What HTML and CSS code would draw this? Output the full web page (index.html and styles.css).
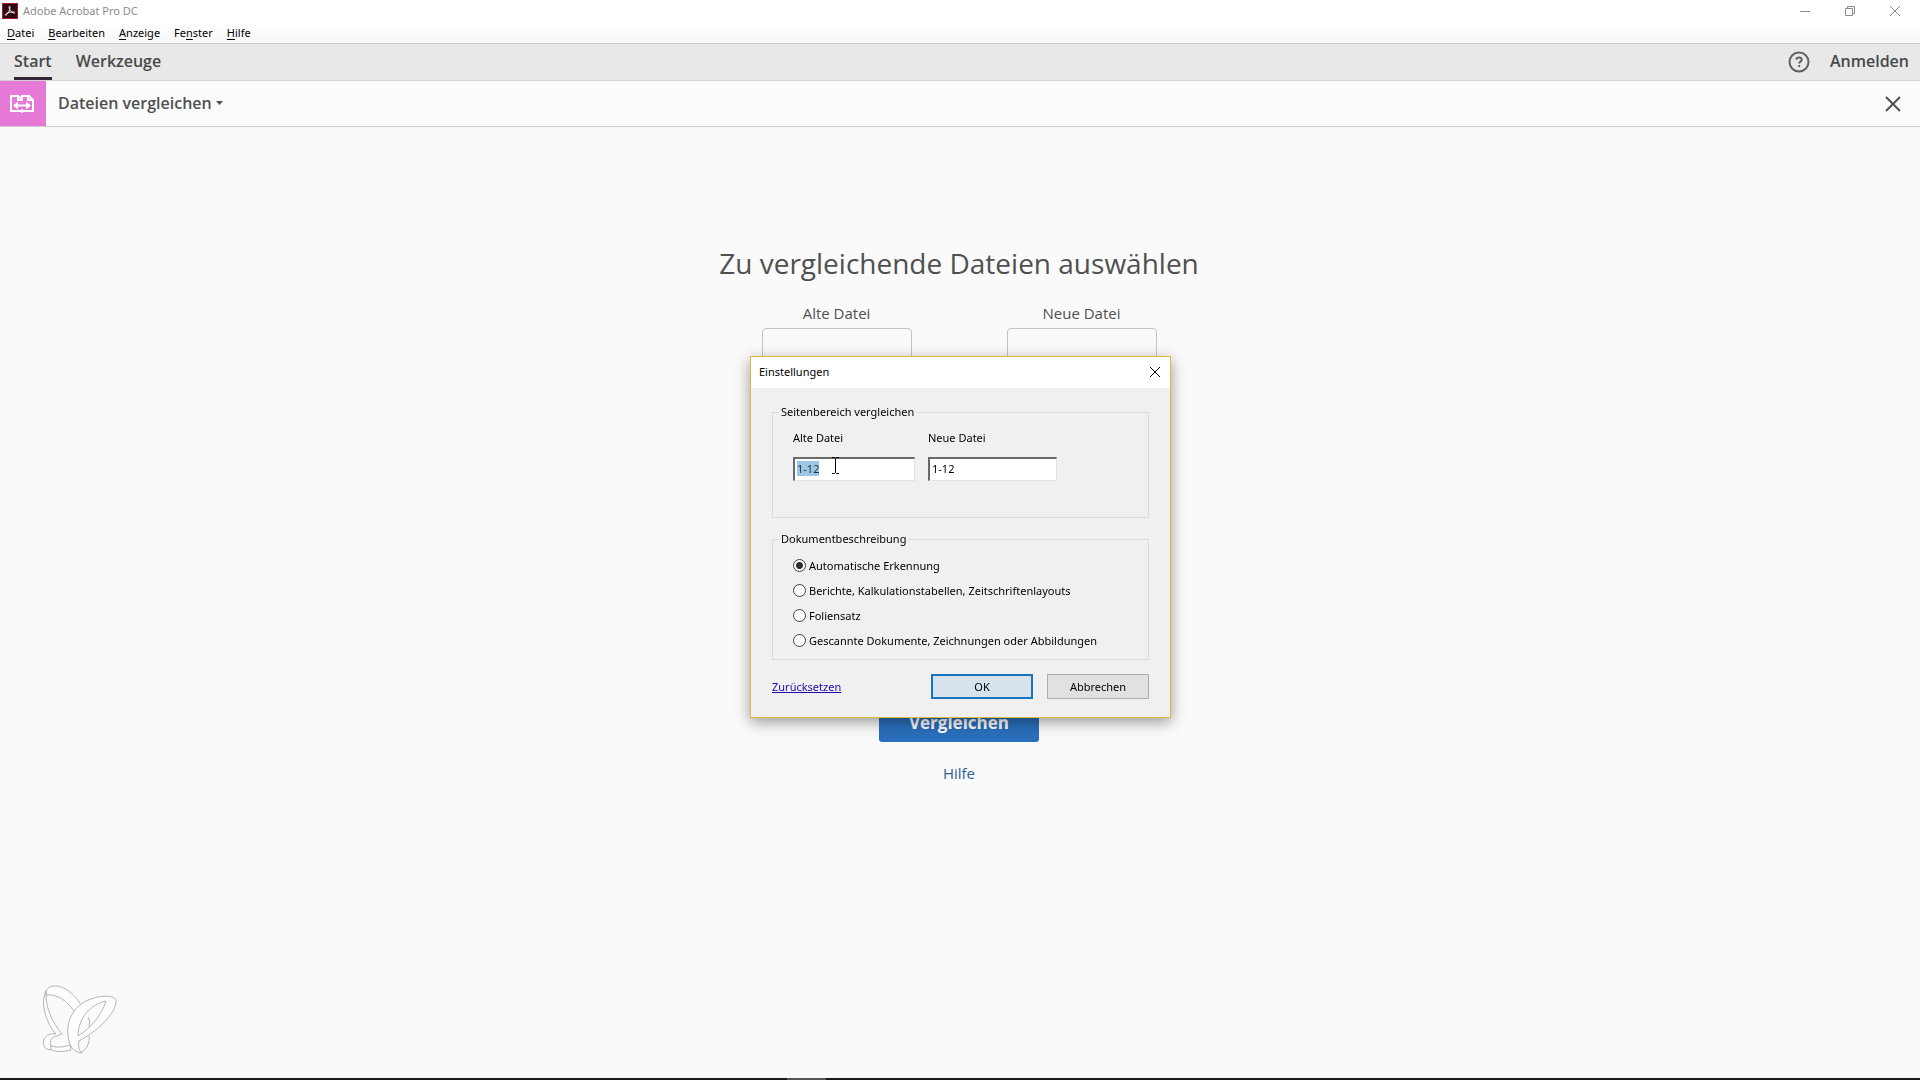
FILE: index.html
```html
<!DOCTYPE html>
<html lang="de">
<head>
<meta charset="utf-8">
<title>Adobe Acrobat Pro DC</title>
<link rel="stylesheet" href="styles.css">
</head>
<body>
<div class="window">
  <header class="titlebar">
    <svg class="app-icon" viewBox="0 0 16 16" aria-hidden="true">
      <rect width="16" height="16" fill="#a31f2b"/>
      <rect x="1" y="1" width="14" height="14" fill="#2d0a10"/>
      <path d="M7.500 3.200c1.100 0 .6 2.600-.5 5C6 10.500 4.300 12.500 3.500 12.300c-1-.4.700-2.100 3.600-2.900 2.600-.7 5.600-.7 5.700.2 0 1-2.400.5-4-1.200C7.200 6.800 6.600 3.400 7.500 3.200z" fill="none" stroke="#f3e9ea" stroke-width="1"/>
    </svg>
    <span class="app-name">Adobe Acrobat Pro DC</span>
    <div class="window-controls">
      <button class="icon-button" aria-label="Minimieren"><svg width="12" height="12" viewBox="0 0 12 12"><path d="M1 6.500h10"/></svg></button>
      <button class="icon-button" aria-label="Verkleinern"><svg width="12" height="12" viewBox="0 0 12 12"><path d="M1.500 3.500h7v7h-7zM3.500 3.500v-2h7v7h-2"/></svg></button>
      <button class="icon-button" aria-label="Schließen"><svg width="12" height="12" viewBox="0 0 12 12"><path d="M1 1l10 10M11 1L1 11"/></svg></button>
    </div>
  </header>
  <nav class="menubar" aria-label="Menü">
    <button><u>D</u>atei</button>
    <button><u>B</u>earbeiten</button>
    <button><u>A</u>nzeige</button>
    <button>Fe<u>n</u>ster</button>
    <button><u>H</u>ilfe</button>
  </nav>
  <nav class="tabs" aria-label="Ansichten">
    <a class="tab tab-active" href="#start">Start</a>
    <a class="tab" href="#werkzeuge">Werkzeuge</a>
    <button class="icon-button help" aria-label="Hilfe"><svg width="22" height="22" viewBox="0 0 22 22"><circle cx="11" cy="11" r="9.500"/><path d="M8.300 8.600c.2-1.500 1.300-2.100 2.700-2.100 1.600 0 2.700.8 2.700 2.200 0 1.900-2.500 1.900-2.500 3.800M11.200 14v1.900"/></svg></button>
    <a class="sign-in" href="#anmelden">Anmelden</a>
  </nav>
  <div class="toolbar">
    <span class="tool-icon"><svg width="26" height="20" viewBox="0 0 26 20" aria-hidden="true"><path d="M2 2h7l4 3V2h7l4 4v11H2z" fill="none" stroke="#fff" stroke-width="2"/><path d="M9 2v4h3M19 2v4h4M13 3v4M13 15v4" fill="none" stroke="#fff" stroke-width="2"/><path d="M7 11.500h12" stroke="#fff" stroke-width="2"/><path d="M9 7.500v8l-5-4zM17 7.500v8l5-4z" fill="#fff"/></svg></span>
    <button class="tool-name">Dateien vergleichen<svg width="7" height="4" viewBox="0 0 7 4" aria-hidden="true"><path d="M0 0h7L3.500 4z"/></svg></button>
    <button class="icon-button close-tool" aria-label="Werkzeug schließen"><svg width="16" height="16" viewBox="0 0 16 16"><path d="M1 1l14 14M15 1L1 15"/></svg></button>
  </div>
  <main class="workspace">
    <h1>Zu vergleichende Dateien auswählen</h1>
    <div class="files">
      <section class="file"><h2>Alte Datei</h2><div class="preview"></div></section>
      <section class="file"><h2>Neue Datei</h2><div class="preview"></div></section>
    </div>
    <button class="compare">Vergleichen</button>
    <a class="help-link" href="#hilfe">Hilfe</a>
    <svg class="watermark" viewBox="0 0 78 70" aria-hidden="true">
      <g fill="#fdfdfd" stroke="#a2a2a2" stroke-width=".8">
        <path d="M5 7C8 0 20 0 30 9c6 5 9 10 12 16l-6 9C31 20 17 9 5 11z"/>
        <path d="M5 7C-1 19 5 39 15 50c-4-1-10 1-12 5-2 5 0 10 6 11l2-2c-4-6-1-11 5-12l5-2C11 38 5 24 5 11z"/>
        <path d="M10 62c7 2 13 1 19-1l1 5c-7 2-14 2-20 0z"/>
        <path fill-rule="evenodd" d="M27 51c-2-15 7-31 23-36 11-4 22-4 25 1 1 10-12 27-37 41-1 5 0 9 3 12-9-1-13-7-14-18zM37 52c14-9 23-20 28-35-15 3-28 17-28 35z"/>
        <path d="M47 33c2 4 2 7 1 10M48 52c1 6-2 13-7 16" fill="none"/>
      </g>
    </svg>
  </main>
  <div class="taskbar"></div>
</div>

<div class="overlay">
  <form class="dialog" role="dialog" aria-labelledby="dialog-title">
    <header class="dialog-header">
      <span id="dialog-title">Einstellungen</span>
      <button type="button" class="icon-button" aria-label="Dialog schließen"><svg width="12" height="12" viewBox="0 0 12 12"><path d="M1 1l10 10M11 1L1 11"/></svg></button>
    </header>
    <div class="dialog-body">
      <fieldset class="group ranges">
        <legend>Seitenbereich vergleichen</legend>
        <label class="range-old">Alte Datei
          <input type="text" id="range-old" value="1-12">
          <svg class="cursor" width="9" height="17" viewBox="0 0 9 17" aria-hidden="true"><path d="M1 .5h2.500l1 1 1-1H8M4.500 1.500v14M1 16.500h2.500l1-1 1 1H8" fill="none" stroke="#000"/></svg>
        </label>
        <label class="range-new">Neue Datei
          <input type="text" value="1-12">
        </label>
      </fieldset>
      <fieldset class="group kinds">
        <legend>Dokumentbeschreibung</legend>
        <label><input type="radio" name="kind" checked>Automatische Erkennung</label>
        <label><input type="radio" name="kind">Berichte, Kalkulationstabellen, Zeitschriftenlayouts</label>
        <label><input type="radio" name="kind">Foliensatz</label>
        <label><input type="radio" name="kind">Gescannte Dokumente, Zeichnungen oder Abbildungen</label>
      </fieldset>
      <footer class="actions">
        <a href="#zuruecksetzen">Zurücksetzen</a>
        <button type="button" class="primary">OK</button>
        <button type="button">Abbrechen</button>
      </footer>
    </div>
  </form>
</div>
<script src="script.js"></script>
</body>
</html>
```
FILE: styles.css
```css
* { box-sizing: border-box; }

body {
  margin: 0;
  font: 11px/16px "Noto Sans", "Open Sans", sans-serif;
  color: #000;
  background: #fafafa;
}

button, input {
  font: inherit;
  color: inherit;
}

button {
  padding: 0;
  border: 0;
  background: none;
}

a {
  color: inherit;
  text-decoration: none;
}

.window {
  display: flex;
  flex-direction: column;
  min-height: 100vh;
}

.icon-button {
  display: flex;
  align-items: center;
  justify-content: center;
}

.icon-button svg {
  fill: none;
  stroke: currentColor;
}

.titlebar {
  display: flex;
  align-items: center;
  height: 22px;
  padding: 0 19px 0 2px;
  background: #fff;
  color: #8c8c8c;
}

.app-icon {
  width: 16px;
  height: 16px;
  margin-right: 5px;
}

.window-controls {
  display: flex;
  gap: 33px;
  margin-left: auto;
}

.menubar {
  display: flex;
  gap: 14px;
  height: 21px;
  padding: 0 7px;
  background: linear-gradient(#fff, #f7f7f7);
}

.menubar u { text-underline-offset: 2px; }

.tabs {
  display: flex;
  align-items: center;
  height: 37px;
  padding: 0 11px 0 14px;
  border-top: 1px solid #cbcbcb;
  background: #e8e8e8;
  font: 600 16px/34px "Open Sans", "Noto Sans", sans-serif;
  color: #484848;
}

.tab {
  height: 36px;
  margin-right: 24px;
}

.tab-active { border-bottom: 3px solid #33243a; }

.help {
  margin-left: auto;
  color: #606060;
}

.help svg { stroke-width: 2; }

.sign-in {
  height: 36px;
  margin-left: 20px;
}

.toolbar {
  display: flex;
  align-items: center;
  height: 47px;
  padding-right: 19px;
  border-top: 1px solid #d2d2d2;
  border-bottom: 1px solid #cdcdcd;
  background: #fbfbfb;
  color: #505050;
}

.tool-icon {
  display: flex;
  align-items: center;
  justify-content: center;
  align-self: stretch;
  width: 46px;
  padding-right: 2px;
  background: #e678d8;
}

.tool-name {
  display: flex;
  align-items: center;
  gap: 4px;
  margin-left: 12px;
  padding-bottom: 2px;
  font: 600 16px/24px "Open Sans", "Noto Sans", sans-serif;
}

.tool-name svg { fill: currentColor; }

.close-tool { margin-left: auto; }
.close-tool svg { stroke-width: 2; }

.workspace {
  display: flex;
  flex: 1;
  flex-direction: column;
  align-items: center;
  padding: 114px 2px 0 0;
  position: relative;
  font-family: "Open Sans", "Noto Sans", sans-serif;
  color: #505050;
}

h1 {
  margin: 0;
  font-size: 28px;
  font-weight: 400;
  line-height: 44px;
}

.files {
  display: flex;
  gap: 95px;
  margin-top: 16px;
}

.file { width: 150px; }

h2 {
  margin: 0;
  font-size: 15px;
  font-weight: 400;
  line-height: 24px;
  text-align: center;
}

.preview {
  height: 200px;
  margin-top: 3px;
  border: 1px solid #c4c4c4;
  border-radius: 4px;
}

.compare {
  width: 160px;
  height: 38px;
  margin-top: 176px;
  border-radius: 3px;
  background: #2a6fbc;
  color: #fff;
  font-size: 17px;
  font-weight: 700;
}

.help-link {
  margin-top: 19px;
  font-size: 15px;
  line-height: 24px;
  color: #2d5f99;
}

.watermark {
  position: absolute;
  left: 41px;
  bottom: 24px;
  width: 78px;
  height: 70px;
}

.taskbar {
  height: 2px;
  background: linear-gradient(90deg, #1c181b 41%, #555 41%, #555 43%, #1c181b 43%);
}

.overlay {
  position: fixed;
  inset: 0;
  display: flex;
  align-items: center;
  justify-content: center;
  padding: 0 0 6px 1px;
}

.dialog {
  width: 421px;
  border: 1px solid #e0b93c;
  background: #f0f0f0;
  box-shadow: 0 4px 14px rgba(0, 0, 0, .4);
}

.dialog-header {
  display: flex;
  align-items: center;
  justify-content: space-between;
  height: 31px;
  padding: 0 9px 2px 8px;
  background: #fff;
}

.dialog-body { padding: 16px 21px 18px; }

.group {
  min-width: 0;
  margin: 0;
  padding: 0 20px;
  border: 1px solid #dcdcdc;
}

.group legend {
  margin-left: -14px;
  padding: 0 2px;
}

.ranges {
  display: flex;
  gap: 13px;
  height: 114px;
}

.ranges label {
  position: relative;
  padding-top: 10px;
}

.ranges input {
  display: block;
  width: 100%;
  height: 24px;
  margin-top: 11px;
  padding: 0 2px 2px;
  border: 1px solid #e3e3e3;
  border-top: 2px solid #696969;
  border-left: 2px solid #696969;
  background: #fff;
  outline: 0;
}

.range-old { width: 122px; }
.range-new { width: 129px; }

.ranges ::selection {
  background: #9cc6e4;
  color: #17344c;
}

.cursor {
  position: absolute;
  left: 38px;
  top: 37px;
}

.kinds {
  height: 129px;
  margin-top: 13px;
  padding-top: 6px;
}

.kinds label {
  display: flex;
  align-items: center;
  gap: 3px;
  height: 25px;
}

.kinds input {
  appearance: none;
  width: 13px;
  height: 13px;
  margin: 0;
  border: 1px solid #404040;
  border-radius: 50%;
  background: #fff;
}

.kinds input:checked { background: radial-gradient(circle, #303030 3px, #fff 4px); }

.actions {
  display: flex;
  align-items: center;
  margin-top: 14px;
}

.actions a {
  margin-right: auto;
  color: #1c0aa8;
  text-decoration: underline;
}

.actions button {
  width: 102px;
  height: 25px;
  margin-left: 14px;
  border: 1px solid #adadad;
  background: #e1e1e1;
}

.actions .primary {
  border: 2px solid #1874bd;
  background: #d6e3ec;
}
```
FILE: script.js
```js
const oldRange = document.getElementById("range-old");
oldRange.focus();
oldRange.select();
```
